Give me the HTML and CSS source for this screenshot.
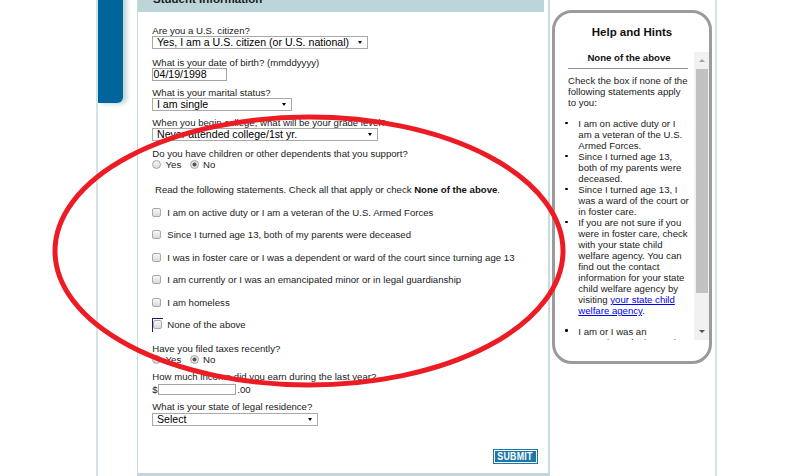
FILE: index.html
```html
<!DOCTYPE html>
<html lang="en">
<head>
<meta charset="utf-8">
<title>Student Information</title>
<link rel="stylesheet" href="styles.css">
</head>
<body>
<div class="page">
  <div class="nav-col"><div class="nav-tab"></div></div>
  <main class="panel">
    <div class="panel-head">Student Information</div>
    <div class="panel-body">
      <div class="field">
        <div class="lbl">Are you a U.S. citizen?</div>
        <div class="sel sel-citizen"><span>Yes, I am a U.S. citizen (or U.S. national)</span><i class="caret"></i></div>
      </div>
      <div class="field f-dob">
        <div class="lbl">What is your date of birth? (mmddyyyy)</div>
        <div class="txt txt-dob">04/19/1998</div>
      </div>
      <div class="field f-marital">
        <div class="lbl">What is your marital status?</div>
        <div class="sel sel-marital"><span>I am single</span><i class="caret"></i></div>
      </div>
      <div class="field f-grade">
        <div class="lbl">When you begin college, what will be your grade level?</div>
        <div class="sel sel-grade"><span>Never attended college/1st yr.</span><i class="caret"></i></div>
      </div>
      <div class="field f-children">
        <div class="lbl">Do you have children or other dependents that you support?</div>
        <div class="radios">
          <span class="opt"><i class="radio"></i>Yes</span>
          <span class="opt"><i class="radio on"></i>No</span>
        </div>
      </div>
      <p class="intro">Read the following statements. Check all that apply or check <b>None of the above</b>.</p>
      <ul class="checks">
        <li><i class="cb"></i>I am on active duty or I am a veteran of the U.S. Armed Forces</li>
        <li><i class="cb"></i>Since I turned age 13, both of my parents were deceased</li>
        <li><i class="cb"></i>I was in foster care or I was a dependent or ward of the court since turning age 13</li>
        <li><i class="cb"></i>I am currently or I was an emancipated minor or in legal guardianship</li>
        <li><i class="cb"></i>I am homeless</li>
        <li><span class="cb-focus"><i class="cb"></i></span>None of the above</li>
      </ul>
      <div class="field f-taxes">
        <div class="lbl">Have you filed taxes recently?</div>
        <div class="radios">
          <span class="opt"><i class="radio"></i>Yes</span>
          <span class="opt"><i class="radio on"></i>No</span>
        </div>
      </div>
      <div class="field f-income">
        <div class="lbl">How much income did you earn during the last year?</div>
        <div class="money">$<span class="txt txt-income"></span><span class="cents">.00</span></div>
      </div>
      <div class="field f-state">
        <div class="lbl">What is your state of legal residence?</div>
        <div class="sel sel-state"><span>Select</span><i class="caret"></i></div>
      </div>
      <div class="actions"><button class="submit" type="button"><span>SUBMIT</span></button></div>
    </div>
  </main>
  <aside class="help-col">
    <div class="help-box">
      <h2 class="help-title">Help and Hints</h2>
      <div class="help-scroll">
        <div class="help-content">
          <h3>None of the above</h3>
          <hr>
          <p>Check the box if none of the following statements apply to you:</p>
          <ul>
            <li>I am on active duty or I am a veteran of the U.S. Armed Forces.</li>
            <li>Since I turned age 13, both of my parents were deceased.</li>
            <li>Since I turned age 13, I was a ward of the court or in foster care.</li>
            <li>If you are not sure if you were in foster care, check with your state child welfare agency. You can find out the contact information for your state child welfare agency by visiting <a href="#">your state child welfare agency</a>.</li>
            <li class="gap">I am or I was an emancipated minor or in legal guardianship.</li>
            <li>I am homeless or at risk of being homeless.</li>
          </ul>
        </div>
        <div class="vscroll">
          <span class="sb-btn"><i class="sb-up"></i></span>
          <span class="sb-thumb"></span>
          <span class="sb-fill"></span>
          <span class="sb-btn"><i class="sb-down"></i></span>
        </div>
      </div>
    </div>
  </aside>
</div>
<svg class="annot" width="790" height="476" viewBox="0 0 790 476" aria-hidden="true">
  <ellipse cx="309" cy="251" rx="254" ry="134" fill="none" stroke="#ed1c24" stroke-width="5"/>
</svg>
</body>
</html>
```
FILE: styles.css
```css
* { box-sizing: border-box; margin: 0; padding: 0; }
html, body { background: #fff; }
body {
  position: relative;
  width: 790px;
  height: 476px;
  overflow: hidden;
  font-family: "Liberation Sans", Arial, Helvetica, sans-serif;
  font-size: 9.6px;
  line-height: 11px;
  color: #222;
}

.page {
  display: flex;
  align-items: stretch;
  height: 489px;
  margin: -13px 0 0 96px;
}

/* left nav column */
.nav-col {
  flex: none;
  width: 41px;
  border-left: 2px solid #d4e3e6;
}
.nav-tab {
  width: 25px;
  height: 115.7px;
  background: #00659a;
  border-bottom-right-radius: 6px;
  box-shadow: 4px 1px 4px rgba(140, 178, 188, 0.55);
}

/* form panel */
.panel {
  flex: none;
  width: 413px;
  border-left: 1px solid #c8dbdf;
  border-right: 2px solid #c8dbdf;
  border-bottom: 3px solid #c5d6da;
}
.panel-head {
  height: 25px;
  line-height: 25px;
  margin-right: 4px;
  padding-left: 15px;
  background: #bcd5d9;
  font-weight: bold;
  font-size: 11.5px;
  color: #1a1a1a;
  white-space: nowrap;
}
.panel-body { padding: 13.3px 0 0 14.3px; }

.lbl { line-height: 11px; white-space: nowrap; }

.f-dob { margin-top: 7.7px; }
.f-marital { margin-top: 6.3px; }
.f-grade { margin-top: 6px; }
.f-children { margin-top: 7.2px; }
.f-taxes { margin-top: 6.75px; }
.f-income { margin-top: 6px; }
.f-state { margin-top: 4px; }

.sel {
  display: flex;
  align-items: center;
  justify-content: space-between;
  height: 13px;
  border: 1px solid #a9a9a9;
  background: #fff;
  padding: 0 5px 0 3.7px;
  font-size: 10.6px;
  line-height: 11px;
  color: #000;
  white-space: nowrap;
}
.sel-citizen { width: 216px; }
.sel-marital { width: 140px; }
.sel-grade { width: 226px; }
.sel-state { width: 166px; margin-top: 1px; }
.caret {
  width: 0;
  height: 0;
  border-left: 2px solid transparent;
  border-right: 2px solid transparent;
  border-top: 3px solid #000;
}

.txt {
  display: block;
  height: 13px;
  border: 1px solid #a5a5a5;
  background: #fff;
  padding-left: 0.3px;
  font-size: 10.6px;
  line-height: 11px;
  color: #000;
}
.txt-dob { width: 75px; }
.money {
  display: flex;
  align-items: center;
  height: 15px;
}
.txt-income { width: 78px; height: 11px; }
.cents { margin-left: 1.7px; }

.radios {
  display: flex;
  align-items: center;
  height: 11px;
}
.opt { display: inline-flex; align-items: center; margin-right: 8.5px; }
.radio {
  width: 9px;
  height: 9px;
  margin-right: 4.3px;
  border: 1px solid #a4a4a4;
  border-radius: 50%;
  background: linear-gradient(#f6f6f6, #dcdcdc);
}
.radio.on {
  background: radial-gradient(circle, #555 0 1.7px, #e4e4e4 2.3px);
}

.intro { margin-top: 13.5px; padding-left: 2.7px; line-height: 11px; white-space: nowrap; }
.intro b { color: #111; }

.checks { list-style: none; margin-top: 6.25px; }
.checks li {
  display: flex;
  align-items: center;
  height: 22.5px;
  white-space: nowrap;
}
.cb {
  width: 9px;
  height: 9px;
  margin-right: 6px;
  border: 1px solid #a9a9a9;
  border-radius: 2px;
  background: linear-gradient(#f7f7f7, #dadada);
}
.cb-focus {
  display: inline-flex;
  align-items: flex-start;
  width: 11px;
  height: 14px;
  margin-right: 4px;
  padding-top: 1.5px;
  border-top: 1px solid #1e1e6e;
  border-left: 1px solid #1e1e6e;
}
.cb-focus .cb { margin-right: 0; }

.actions {
  display: flex;
  justify-content: flex-end;
  margin-top: 23.3px;
  padding-right: 10.3px;
}
.submit {
  display: flex;
  align-items: center;
  justify-content: center;
  width: 44.4px;
  height: 14.7px;
  background: #1d78a8;
  border: 1px solid #1d78a8;
  box-shadow: inset 0 0 0 1px #fff;
  color: #fff;
  overflow: hidden;
}
.submit span {
  display: inline-block;
  font-family: "Liberation Sans", Arial, sans-serif;
  font-weight: bold;
  font-size: 10.5px;
  line-height: 11px;
  letter-spacing: 0.3px;
  transform: scaleX(0.84);
}

/* help column */
.help-col {
  flex: none;
  width: 167px;
  border-right: 2px solid #d4e3e6;
  padding: 23px 3px 0 2px;
}
.help-box {
  width: 160px;
  height: 354px;
  border: 3px solid #9b9b9b;
  border-radius: 20px;
}
.help-title {
  margin-top: 13px;
  font-size: 11.5px;
  line-height: 13.2px;
  font-weight: bold;
  text-align: center;
  color: #111;
}
.help-scroll {
  display: flex;
  height: 288.3px;
  margin: 12.5px 0 0 1px;
}
.help-content {
  width: 138px;
  padding: 0.3px 4px 0 12px;
  overflow: hidden;
  font-size: 9.6px;
  line-height: 11px;
  color: #222;
}
.help-content h3 {
  font-size: 9.6px;
  line-height: 11px;
  font-weight: bold;
  text-align: center;
  color: #111;
}
.help-content hr {
  width: 120px;
  margin-top: 5.3px;
  border: 0;
  border-top: 1px solid #8f8f8f;
}
.help-content p { margin-top: 5.4px; }
.help-content ul { list-style: none; margin-top: 10.3px; }
.help-content li { position: relative; padding-left: 10.3px; }
.help-content li::before {
  content: "";
  position: absolute;
  left: -2.7px;
  top: 3.6px;
  width: 2.4px;
  height: 2.4px;
  border-radius: 50%;
  background: #000;
}
.help-content li.gap { margin-top: 9.7px; }
.help-content a { color: #0000ee; text-decoration: underline; }

.vscroll {
  flex: none;
  width: 15px;
  display: flex;
  flex-direction: column;
  background: #f1f1f1;
}
.sb-btn {
  flex: none;
  height: 17px;
  display: flex;
  align-items: center;
  justify-content: center;
}
.sb-up {
  width: 0; height: 0;
  border-left: 3.5px solid transparent;
  border-right: 3.5px solid transparent;
  border-bottom: 3.5px solid #a3a3a3;
}
.sb-down {
  width: 0; height: 0;
  border-left: 3.5px solid transparent;
  border-right: 3.5px solid transparent;
  border-top: 3.5px solid #505050;
}
.sb-thumb {
  flex: none;
  height: 224.3px;
  margin: 0.3px 1px 0 2px;
  background: #c1c1c1;
}
.sb-fill { flex: 1; }

/* annotation drawn over the page */
.annot {
  position: absolute;
  left: 0;
  top: 0;
  pointer-events: none;
}
```
